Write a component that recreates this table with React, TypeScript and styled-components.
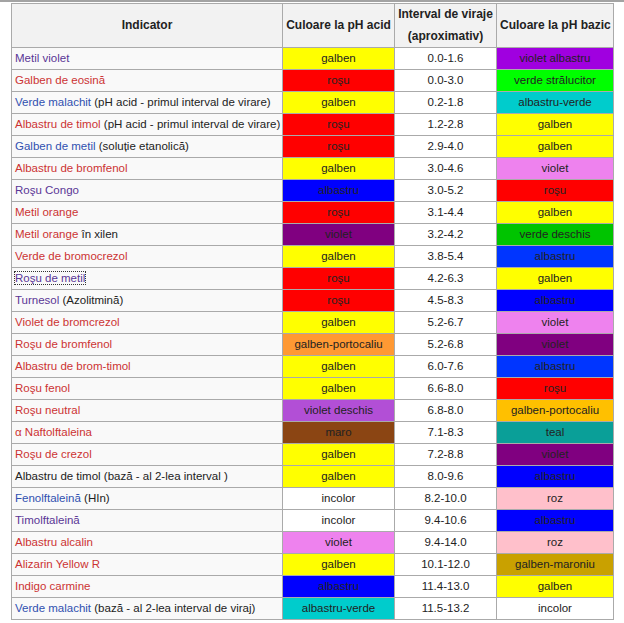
import React from 'react'
import styled, { createGlobalStyle } from 'styled-components'

type Tone = 'visited' | 'link' | 'new'

interface Indicator {
    name: string
    tone: Tone | null
    note?: string
    focused?: boolean
    acid: [string, string]
    range: string
    basic: [string, string]
}

const GALBEN: [string, string] = ['galben', '#ffff00']
const ROSU: [string, string] = ['roşu', '#ff0000']
const ALBASTRU: [string, string] = ['albastru', '#0000ff']
const ALBASTRU_DESCHIS: [string, string] = ['albastru', '#0035ff']
const VIOLET_INCHIS: [string, string] = ['violet', '#800080']
const VIOLET_ROZ: [string, string] = ['violet', '#ee82ee']
const INCOLOR: [string, string] = ['incolor', '#ffffff']
const ROZ: [string, string] = ['roz', '#ffc0cb']
const ALBASTRU_VERDE: [string, string] = ['albastru-verde', '#00cccc']

const indicators: Indicator[] = [
    { name: 'Metil violet', tone: 'visited', acid: GALBEN, range: '0.0-1.6', basic: ['violet albastru', '#a000e0'] },
    { name: 'Galben de eosină', tone: 'new', acid: ROSU, range: '0.0-3.0', basic: ['verde strălucitor', '#00ff00'] },
    { name: 'Verde malachit', tone: 'link', note: ' (pH acid - primul interval de virare)', acid: GALBEN, range: '0.2-1.8', basic: ALBASTRU_VERDE },
    { name: 'Albastru de timol', tone: 'new', note: ' (pH acid - primul interval de virare)', acid: ROSU, range: '1.2-2.8', basic: GALBEN },
    { name: 'Galben de metil', tone: 'link', note: ' (soluție etanolică)', acid: ROSU, range: '2.9-4.0', basic: GALBEN },
    { name: 'Albastru de bromfenol', tone: 'new', acid: GALBEN, range: '3.0-4.6', basic: VIOLET_ROZ },
    { name: 'Roşu Congo', tone: 'visited', acid: ALBASTRU, range: '3.0-5.2', basic: ROSU },
    { name: 'Metil orange', tone: 'new', acid: ROSU, range: '3.1-4.4', basic: GALBEN },
    { name: 'Metil orange', tone: 'new', note: ' în xilen', acid: VIOLET_INCHIS, range: '3.2-4.2', basic: ['verde deschis', '#00c400'] },
    { name: 'Verde de bromocrezol', tone: 'new', acid: GALBEN, range: '3.8-5.4', basic: ALBASTRU_DESCHIS },
    { name: 'Roşu de metil', tone: 'visited', focused: true, acid: ROSU, range: '4.2-6.3', basic: GALBEN },
    { name: 'Turnesol', tone: 'visited', note: ' (Azolitmină)', acid: ROSU, range: '4.5-8.3', basic: ALBASTRU },
    { name: 'Violet de bromcrezol', tone: 'new', acid: GALBEN, range: '5.2-6.7', basic: VIOLET_ROZ },
    { name: 'Roşu de bromfenol', tone: 'new', acid: ['galben-portocaliu', '#ff9933'], range: '5.2-6.8', basic: VIOLET_INCHIS },
    { name: 'Albastru de brom-timol', tone: 'new', acid: GALBEN, range: '6.0-7.6', basic: ALBASTRU_DESCHIS },
    { name: 'Roşu fenol', tone: 'new', acid: GALBEN, range: '6.6-8.0', basic: ROSU },
    { name: 'Roşu neutral', tone: 'new', acid: ['violet deschis', '#b24fd6'], range: '6.8-8.0', basic: ['galben-portocaliu', '#ffc000'] },
    { name: 'α Naftolftaleina', tone: 'new', acid: ['maro', '#8b4513'], range: '7.1-8.3', basic: ['teal', '#0a9f98'] },
    { name: 'Roşu de crezol', tone: 'new', acid: GALBEN, range: '7.2-8.8', basic: VIOLET_INCHIS },
    { name: 'Albastru de timol (bază - al 2-lea interval )', tone: null, acid: GALBEN, range: '8.0-9.6', basic: ALBASTRU },
    { name: 'Fenolftaleină', tone: 'link', note: ' (HIn)', acid: INCOLOR, range: '8.2-10.0', basic: ROZ },
    { name: 'Timolftaleină', tone: 'visited', acid: INCOLOR, range: '9.4-10.6', basic: ALBASTRU },
    { name: 'Albastru alcalin', tone: 'new', acid: VIOLET_ROZ, range: '9.4-14.0', basic: ROZ },
    { name: 'Alizarin Yellow R', tone: 'new', acid: GALBEN, range: '10.1-12.0', basic: ['galben-maroniu', '#c9a100'] },
    { name: 'Indigo carmine', tone: 'new', acid: ALBASTRU, range: '11.4-13.0', basic: GALBEN },
    { name: 'Verde malachit', tone: 'link', note: ' (bază - al 2-lea interval de viraj)', acid: ALBASTRU_VERDE, range: '11.5-13.2', basic: INCOLOR },
]

const toneColors: Record<Tone, string> = {
    visited: '#5a3696',
    link: '#3050b0',
    new: '#cc3333',
}

const App = () => {
    return (
        <>
            <GlobalStyle />
            <Page>
                <Table>
                    <colgroup>
                        <col style={{ width: 271 }} />
                        <col style={{ width: 112 }} />
                        <col style={{ width: 102 }} />
                        <col style={{ width: 117 }} />
                    </colgroup>
                    <thead>
                        <tr>
                            <HeaderCell>{'Indicator'}</HeaderCell>
                            <HeaderCell>{'Culoare la pH acid'}</HeaderCell>
                            <HeaderCell>{'Interval de viraje'}<br />{'(aproximativ)'}</HeaderCell>
                            <HeaderCell>{'Culoare la pH bazic'}</HeaderCell>
                        </tr>
                    </thead>
                    <tbody>
                        {indicators.map((it, i) => (
                            <tr key={`${it.name}_${i}`}>
                                <NameCell>
                                    {it.tone
                                        ? <WikiLink href='#' $tone={it.tone} $focused={!!it.focused} onClick={e => e.preventDefault()}>{it.name}</WikiLink>
                                        : it.name}
                                    {it.note}
                                </NameCell>
                                <ColorCell $bg={it.acid[1]}>{it.acid[0]}</ColorCell>
                                <RangeCell>{it.range}</RangeCell>
                                <ColorCell $bg={it.basic[1]}>{it.basic[0]}</ColorCell>
                            </tr>
                        ))}
                    </tbody>
                </Table>
            </Page>
        </>
    )
}

const GlobalStyle = createGlobalStyle`
    body {
        margin : 0;
        background : #ffffff;
        font-family : "Liberation Sans", Arial, sans-serif;
    }
`

const Page = styled.div`
    border-top : 2px solid #a3a3a3;
    padding : 1px 0 0 11px;
`

const Table = styled.table`
    border-collapse : collapse;
    table-layout : fixed;
    width : 602px;
    border : 1px solid #aaaaaa;
    background : #f9f9f9;
    color : #222222;
    font-size : 11.5px;
`

const HeaderCell = styled.th`
    background : #f2f2f2;
    border : 1px solid #aaaaaa;
    font-size : 12px;
    font-weight : bold;
    line-height : 21.5px;
    padding : 0 3px;
    text-align : center;
    white-space : nowrap;
`

const NameCell = styled.td`
    border : 1px solid #aaaaaa;
    height : 21px;
    line-height : 21px;
    padding : 0 3px;
    white-space : nowrap;
`

const ColorCell = styled.td<{ $bg: string }>`
    border : 1px solid #aaaaaa;
    background : ${props => props.$bg};
    line-height : 21px;
    padding : 0 3px;
    text-align : center;
    white-space : nowrap;
`

const RangeCell = styled.td`
    border : 1px solid #aaaaaa;
    background : #ffffff;
    line-height : 21px;
    padding : 0 3px;
    text-align : center;
`

const WikiLink = styled.a<{ $tone: Tone, $focused: boolean }>`
    color : ${props => toneColors[props.$tone]};
    text-decoration : none;
    outline : ${props => props.$focused ? '1px dotted #333333' : 'none'};
`

export default App
